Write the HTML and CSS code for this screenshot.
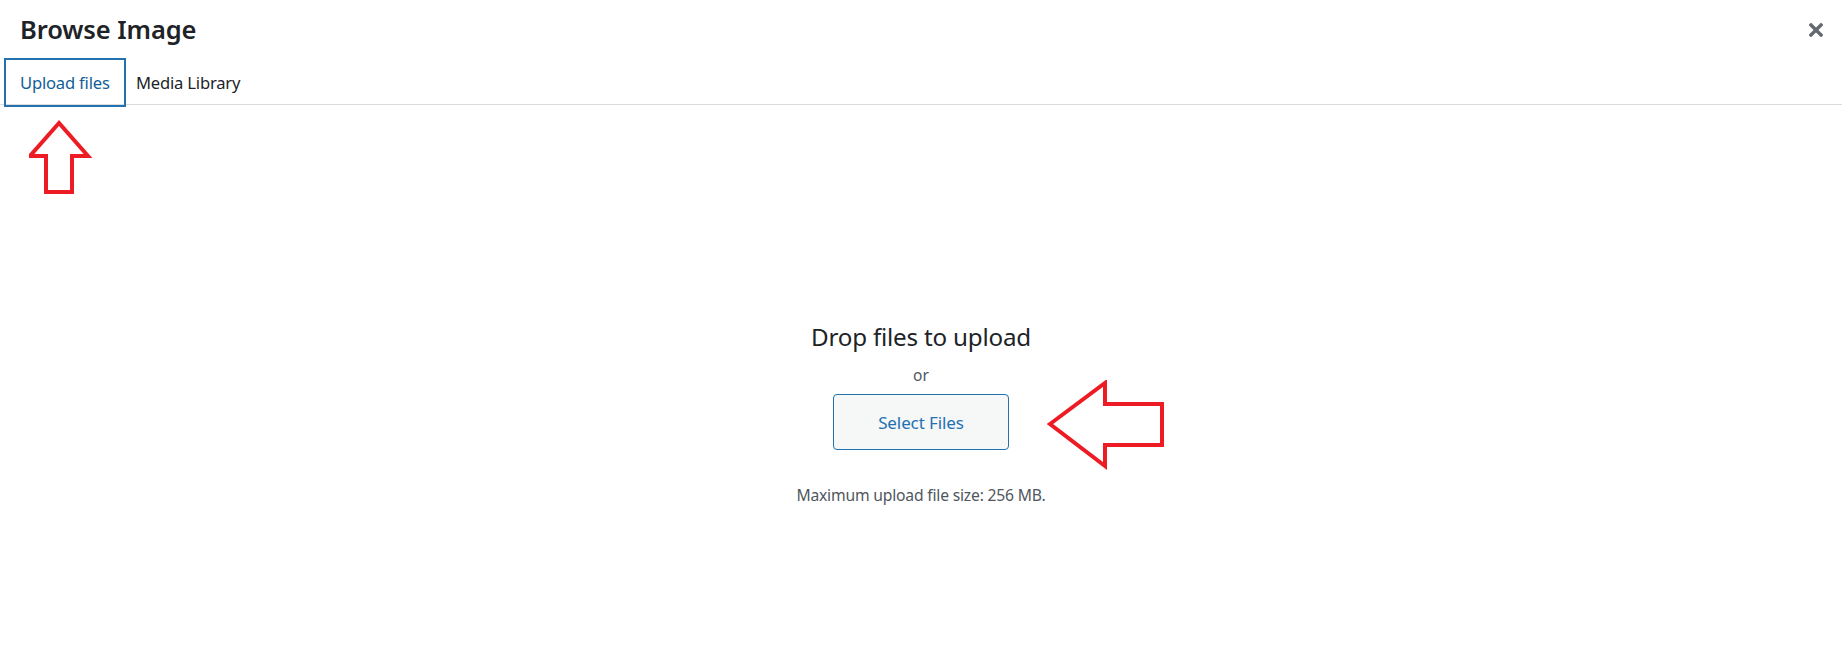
FILE: index.html
```html
<!DOCTYPE html>
<html lang="en">
<head>
<meta charset="utf-8">
<title>Browse Image</title>
<link rel="stylesheet" href="styles.css">
</head>
<body>
<div class="modal">
  <header class="modal-head">
    <h1 class="title">Browse Image</h1>
    <button class="close" aria-label="Close">
      <svg width="14" height="14" viewBox="0 0 14 14"><path d="M2 2 L12 12 M12 2 L2 12" stroke="#646970" stroke-width="3.4" stroke-linecap="square"/></svg>
    </button>
  </header>
  <nav class="tabs">
    <a class="tab active">Upload files</a>
    <a class="tab">Media Library</a>
  </nav>
  <main class="upload">
    <h2 class="drop">Drop files to upload</h2>
    <p class="or">or</p>
    <button class="select">Select Files</button>
    <p class="max">Maximum upload file size: 256 MB.</p>
  </main>
  <svg class="arrow arrow-up" width="70" height="80" viewBox="0 0 70 80"><polygon points="30,3 1,36 17,36 17,72 43,72 43,36 59,36" fill="none" stroke="#ed1c24" stroke-width="4" stroke-linejoin="miter"/></svg>
  <svg class="arrow arrow-left" width="125" height="95" viewBox="0 0 125 95"><polygon points="3,44 58,3 58,24 115,24 115,65 58,65 58,86" fill="none" stroke="#ed1c24" stroke-width="4" stroke-linejoin="miter"/></svg>
</div>
</body>
</html>
```
FILE: styles.css
```css
* { box-sizing: border-box; }
html, body { margin: 0; padding: 0; background: #fff; }
body {
  font-family: "Noto Sans", "Open Sans", sans-serif;
  color: #1d2327;
  width: 1842px;
  height: 654px;
  overflow: hidden;
}
.modal { position: relative; height: 654px; }
.modal-head {
  height: 58px;
  display: flex;
  align-items: center;
  justify-content: space-between;
  padding: 0 20px 0 20px;
}
.title {
  margin: 0;
  font-size: 25.5px;
  font-weight: 600;
  letter-spacing: -0.1px;
  color: #1d2327;
  line-height: 1;
  padding-top: 2px;
}
.close {
  border: 0;
  background: none;
  padding: 0;
  width: 14px;
  height: 14px;
  display: flex;
  margin-right: -1px;
  margin-top: 2px;
}
.tabs {
  height: 47px;
  border-bottom: 1px solid #dcdcde;
  display: flex;
  align-items: flex-start;
  padding-left: 4px;
}
.tab {
  height: 49px;
  line-height: 45px;
  font-size: 16.6px;
  color: #1d2327;
  padding: 0 8px;
  border: 2px solid transparent;
  letter-spacing: -0.2px;
}
.tab.active {
  border-color: #2271b1;
  color: #135e96;
  padding: 0 14px;
  width: 122px;
}
.upload {
  display: flex;
  flex-direction: column;
  align-items: center;
  padding-top: 217px;
}
.drop {
  margin: 0;
  font-size: 24.2px;
  font-weight: 400;
  line-height: 30px;
  color: #1d2327;
  letter-spacing: -0.2px;
}
.or {
  margin: 13px 0 0;
  font-size: 15.5px;
  line-height: 20px;
  color: #50575e;
}
.select {
  margin-top: 9px;
  width: 176px;
  height: 56px;
  border: 1px solid #2271b1;
  border-radius: 4px;
  background: #f6f7f7;
  color: #2271b1;
  font-family: inherit;
  font-size: 17px;
  letter-spacing: -0.1px;
}
.max {
  margin: 35px 0 0;
  font-size: 15.7px;
  line-height: 20px;
  color: #50575e;
  letter-spacing: -0.2px;
}
.arrow { position: absolute; }
.arrow-up { left: 29px; top: 120px; }
.arrow-left { left: 1047px; top: 380px; }
```
